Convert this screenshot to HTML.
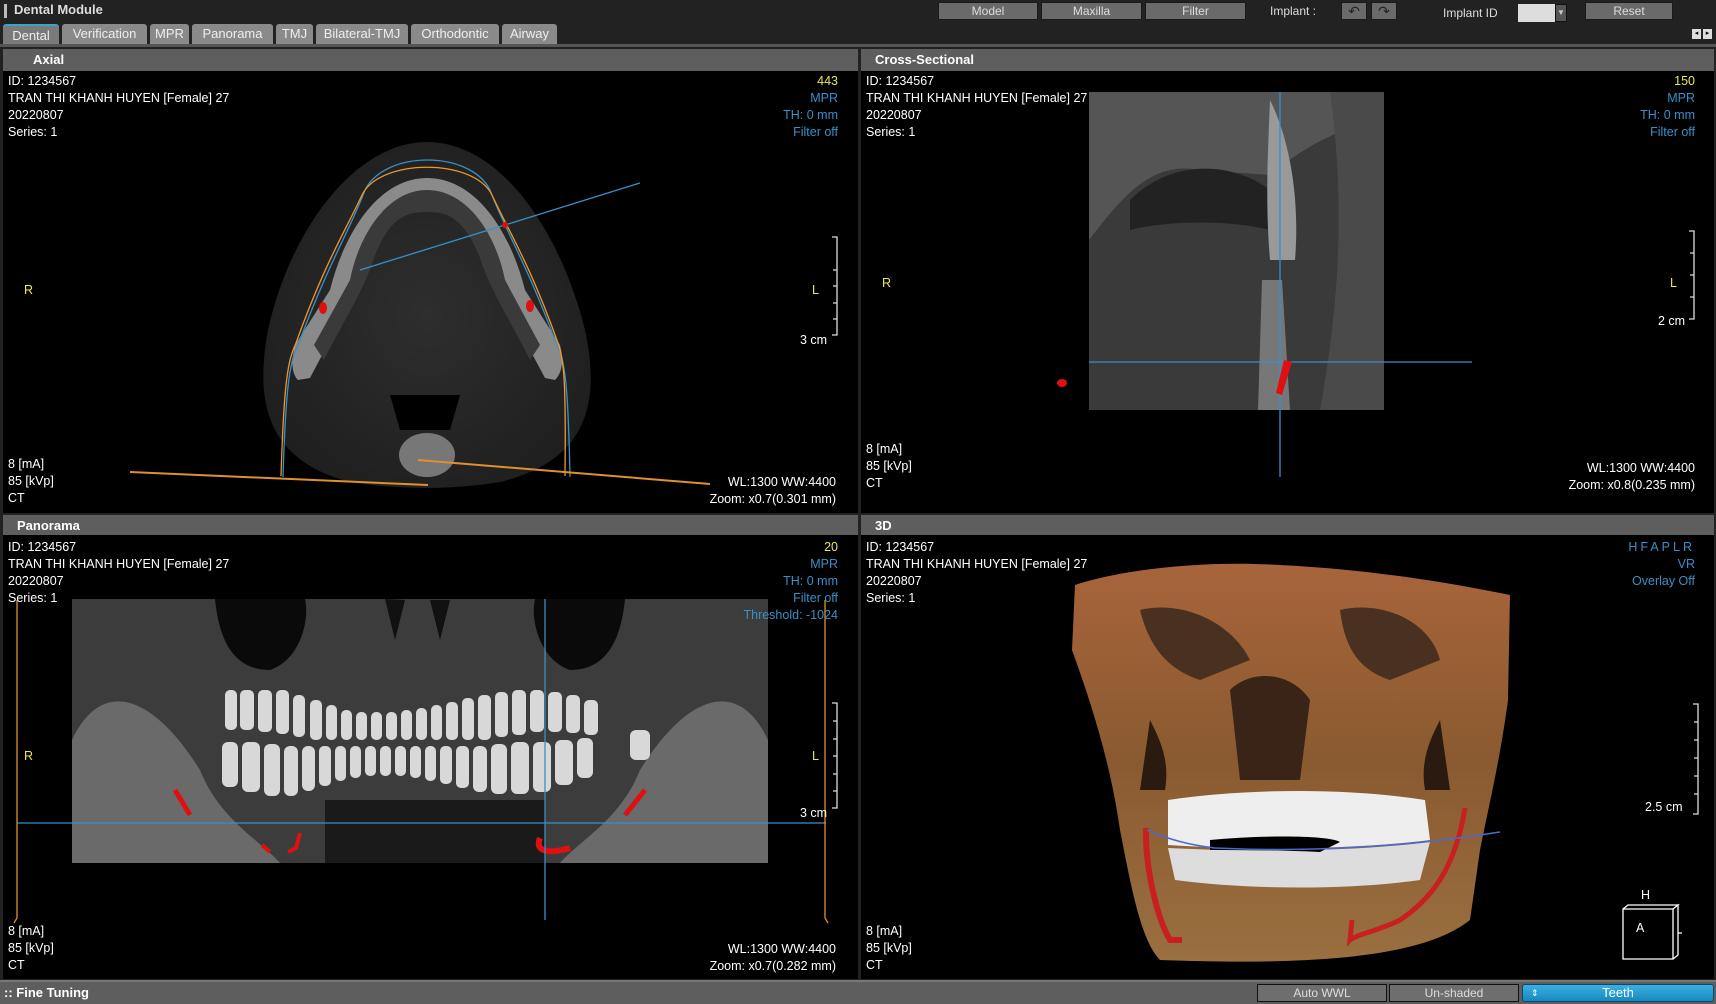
<!DOCTYPE html>
<html><head><meta charset="utf-8"><style>
*{margin:0;padding:0;box-sizing:border-box}
body{width:1716px;height:1004px;background:#222;overflow:hidden;position:relative;font-family:"Liberation Sans",sans-serif;color:#fff}
.a{position:absolute;white-space:nowrap}
.btn{position:absolute;top:2px;height:18px;background:#6a6a6a;border:1px solid #1a1a1a;color:#ddd;font-size:12px;text-align:center;line-height:16px}
.tab{position:absolute;top:24px;height:20px;background:#8a8a8a;color:#eee;font-size:13px;line-height:20px;text-align:center;border-radius:3px 3px 0 0}
.hdr{position:absolute;height:22px;background:#5e5e5e;color:#fff;font-weight:bold;font-size:13px;line-height:22px;padding-left:14px}
.view{position:absolute;background:#000}
.t{position:absolute;font-size:12.5px;line-height:17px;color:#fff;white-space:nowrap}
.r{text-align:right}
.y{color:#e8e85a}.b{color:#3a8fc8}
</style></head><body>
<div class="a" style="left:4px;top:4px;width:3px;height:14px;background:#bbb"></div>
<div class="a" style="left:14px;top:2px;font-size:13px;font-weight:bold;color:#ddd">Dental Module</div>
<div class="tab" style="left:3px;width:56px;background:#7a7a7a;border-top:2px solid #3aa3c8">Dental</div>
<div class="tab" style="left:62px;width:85px">Verification</div>
<div class="tab" style="left:150px;width:39px">MPR</div>
<div class="tab" style="left:192px;width:81px">Panorama</div>
<div class="tab" style="left:276px;width:37px">TMJ</div>
<div class="tab" style="left:316px;width:92px">Bilateral-TMJ</div>
<div class="tab" style="left:411px;width:88px">Orthodontic</div>
<div class="tab" style="left:502px;width:55px">Airway</div>
<div class="a" style="left:0;top:44px;width:1716px;height:3px;background:#555"></div>
<div class="btn" style="left:938px;width:100px">Model</div>
<div class="btn" style="left:1041px;width:101px">Maxilla</div>
<div class="btn" style="left:1145px;width:101px">Filter</div>
<div class="a" style="left:1270px;top:4px;font-size:12px;color:#ddd">Implant :</div>
<div class="btn" style="left:1341px;width:26px;font-size:14px;color:#222">↶</div>
<div class="btn" style="left:1371px;width:26px;font-size:14px;color:#222">↷</div>
<div class="a" style="left:1443px;top:6px;font-size:12px;color:#ddd">Implant ID</div>
<div class="a" style="left:1518px;top:4px;width:37px;height:18px;background:#ddd"></div>
<div class="a" style="left:1555px;top:4px;width:12px;height:18px;background:#555;border:1px solid #111;font-size:8px;color:#ccc;text-align:center;line-height:16px">▼</div>
<div class="btn" style="left:1585px;width:88px">Reset</div>
<div class="a" style="left:1692px;top:29px;width:9px;height:10px;background:#ddd;font-size:7px;color:#000;text-align:center">◂</div>
<div class="a" style="left:1703px;top:29px;width:9px;height:10px;background:#ddd;font-size:7px;color:#000;text-align:center">▸</div>

<div class="hdr" style="left:3px;top:49px;width:855px;padding-left:30px">Axial</div>
<div class="hdr" style="left:861px;top:49px;width:853px">Cross-Sectional</div>
<div class="hdr" style="left:3px;top:515px;width:855px">Panorama</div>
<div class="hdr" style="left:861px;top:515px;width:853px">3D</div>
<div class="view" style="left:3px;top:71px;width:855px;height:442px"></div>
<div class="view" style="left:861px;top:71px;width:853px;height:442px"></div>
<div class="view" style="left:3px;top:535px;width:855px;height:444px"></div>
<div class="view" style="left:861px;top:535px;width:853px;height:444px"></div>

<svg class="a" style="left:0;top:0" width="1716" height="1004">
<defs>
<radialGradient id="sk" cx="0.5" cy="0.5" r="0.6"><stop offset="0" stop-color="#2e2e2e"/><stop offset="1" stop-color="#1e1e1e"/></radialGradient>
<linearGradient id="or" x1="0" y1="0" x2="0" y2="1"><stop offset="0" stop-color="#a8643a"/><stop offset="0.5" stop-color="#8a5a30"/><stop offset="1" stop-color="#9a7040"/></linearGradient>
</defs>
<!-- Axial -->
<path d="M427 142 C500 142 560 230 585 330 C600 400 590 460 500 482 C450 490 400 490 350 482 C265 460 255 400 268 330 C290 230 355 142 427 142Z" fill="url(#sk)"/>
<path d="M427 178 C475 178 510 230 525 290 L560 345 C565 365 560 375 555 380 L545 378 C520 330 500 300 490 265 C470 210 445 205 427 205 C408 205 384 210 365 265 C355 300 335 330 310 378 L298 380 C293 375 290 365 295 345 L330 290 C345 230 380 178 427 178Z" fill="#8a8a8a"/>
<path d="M427 190 C465 190 495 230 505 280 L540 345 L530 360 C510 320 490 290 480 258 C463 215 445 212 427 212 C409 212 390 215 374 258 C364 290 344 320 324 360 L314 345 L350 280 C360 230 390 190 427 190Z" fill="#3a3a3a"/>
<ellipse cx="427" cy="455" rx="28" ry="22" fill="#777"/>
<path d="M390 395 L460 395 L450 430 L400 430Z" fill="#000"/>
<path d="M283 477 C286 380 290 360 300 340 C330 260 350 230 365 190 C385 150 470 150 490 190 C505 230 525 260 555 340 C565 360 568 380 570 477" fill="none" stroke="#3a8fc8" stroke-width="1.3"/>
<path d="M281 476 C284 380 288 360 296 343 C325 262 345 232 362 195 C380 158 474 158 492 195 C509 232 529 262 558 343 C564 360 566 380 565 476" fill="none" stroke="#f0962a" stroke-width="1.3"/>
<line x1="130" y1="472" x2="428" y2="485" stroke="#e0902e" stroke-width="2"/>
<line x1="418" y1="460" x2="710" y2="484" stroke="#e0902e" stroke-width="2"/>
<line x1="360" y1="270" x2="640" y2="183" stroke="#3a8fc8" stroke-width="1.3"/>
<ellipse cx="323" cy="308" rx="4" ry="6" fill="#e01010"/><ellipse cx="530" cy="306" rx="4" ry="6" fill="#e01010"/><circle cx="505" cy="225" r="3" fill="#e01010"/>
<path d="M832 237 h5 v98 h-5 M833 270h4 M833 303h4 M833 319h4 M833 286h4" fill="none" stroke="#ddd" stroke-width="1.3"/>
<!-- Cross-sectional -->
<rect x="1089" y="92" width="295" height="318" fill="#3a3a3a"/>
<path d="M1089 92 h295 v30 C1340 125 1300 150 1270 175 L1200 170 C1150 160 1120 200 1089 240Z" fill="#555"/>
<path d="M1130 200 C1170 160 1230 160 1270 190 L1270 230 C1230 220 1170 220 1130 230Z" fill="#222"/>
<path d="M1270 100 C1290 140 1300 200 1295 260 L1270 260 C1265 200 1268 150 1270 100Z" fill="#999"/>
<path d="M1262 280 L1282 280 L1290 410 L1258 410Z" fill="#777"/>
<path d="M1330 92 L1384 92 L1384 410 L1320 410 C1340 300 1345 200 1330 92Z" fill="#4a4a4a"/>
<line x1="1280" y1="92" x2="1280" y2="477" stroke="#3a8fc8" stroke-width="1.3"/>
<line x1="1089" y1="362" x2="1472" y2="362" stroke="#3a8fc8" stroke-width="1.3"/>
<path d="M1284 360 L1292 362 L1282 395 L1276 393Z" fill="#e01010"/>
<ellipse cx="1062" cy="383" rx="5" ry="4" fill="#e01010"/>
<path d="M1689 231 h5 v88 h-5 M1690 253h4 M1690 275h4 M1690 297h4" fill="none" stroke="#ddd" stroke-width="1.3"/>
<!-- Panorama -->
<rect x="72" y="599" width="696" height="264" fill="#3c3c3c"/>
<path d="M215 599 C220 650 240 670 270 670 C300 660 310 620 305 599Z M625 599 C620 650 600 670 570 670 C540 660 530 620 535 599Z" fill="#0a0a0a"/>
<path d="M385 599 L395 640 L405 600Z M430 600 L440 640 L450 600Z" fill="#111"/>
<path d="M72 740 C100 680 150 690 200 770 C220 820 260 840 280 863 L72 863Z M768 740 C740 680 690 690 640 770 C620 820 580 840 560 863 L768 863Z" fill="#6a6a6a"/>
<path d="M325 800 L545 800 L545 863 L325 863Z" fill="#1a1a1a"/>
<g fill="#d8d8d8">
<rect x="225" y="690" width="12" height="40" rx="5"/><rect x="240" y="690" width="14" height="40" rx="5"/><rect x="258" y="690" width="14" height="42" rx="5"/><rect x="276" y="690" width="13" height="44" rx="5"/><rect x="293" y="695" width="12" height="42" rx="5"/><rect x="310" y="700" width="12" height="40" rx="5"/><rect x="326" y="705" width="11" height="35" rx="5"/><rect x="341" y="710" width="11" height="30" rx="5"/><rect x="356" y="712" width="11" height="28" rx="5"/><rect x="371" y="712" width="11" height="28" rx="5"/><rect x="386" y="712" width="11" height="28" rx="5"/><rect x="401" y="710" width="11" height="30" rx="5"/><rect x="416" y="708" width="11" height="32" rx="5"/><rect x="431" y="705" width="11" height="35" rx="5"/><rect x="446" y="702" width="12" height="38" rx="5"/><rect x="462" y="698" width="12" height="42" rx="5"/><rect x="478" y="695" width="13" height="45" rx="5"/><rect x="495" y="692" width="13" height="45" rx="5"/><rect x="512" y="690" width="14" height="45" rx="5"/><rect x="530" y="690" width="14" height="42" rx="5"/><rect x="548" y="692" width="14" height="40" rx="5"/><rect x="566" y="695" width="14" height="38" rx="5"/><rect x="584" y="700" width="14" height="35" rx="5"/>
<rect x="222" y="742" width="16" height="45" rx="6"/><rect x="242" y="742" width="18" height="50" rx="6"/><rect x="264" y="744" width="16" height="52" rx="6"/><rect x="284" y="746" width="14" height="50" rx="6"/><rect x="302" y="746" width="13" height="45" rx="6"/><rect x="319" y="746" width="12" height="40" rx="5"/><rect x="335" y="746" width="11" height="35" rx="5"/><rect x="350" y="746" width="11" height="32" rx="5"/><rect x="365" y="746" width="11" height="30" rx="5"/><rect x="380" y="746" width="11" height="30" rx="5"/><rect x="395" y="746" width="11" height="30" rx="5"/><rect x="410" y="746" width="11" height="32" rx="5"/><rect x="425" y="746" width="11" height="35" rx="5"/><rect x="440" y="746" width="12" height="38" rx="5"/><rect x="456" y="746" width="13" height="42" rx="5"/><rect x="473" y="746" width="14" height="46" rx="6"/><rect x="491" y="744" width="16" height="50" rx="6"/><rect x="511" y="742" width="18" height="52" rx="6"/><rect x="533" y="742" width="18" height="50" rx="6"/><rect x="555" y="740" width="18" height="45" rx="6"/><rect x="577" y="738" width="16" height="40" rx="6"/><rect x="630" y="730" width="20" height="30" rx="6"/>
</g>
<path d="M175 790 L190 815" stroke="#e01010" stroke-width="5"/><path d="M645 790 L625 815" stroke="#e01010" stroke-width="5"/>
<path d="M262 845 L270 852 M300 833 L296 848 L288 852" stroke="#e01010" stroke-width="4" fill="none"/>
<path d="M540 838 C535 850 545 855 570 848" stroke="#e01010" stroke-width="6" fill="none"/>
<line x1="545" y1="599" x2="545" y2="920" stroke="#3a8fc8" stroke-width="1.3"/>
<line x1="17" y1="823" x2="826" y2="823" stroke="#3a8fc8" stroke-width="1.3"/>
<path d="M17 600 V918 l-3 5 M825 600 V918 l3 5" stroke="#e0902e" stroke-width="1.3" fill="none"/>
<path d="M832 703 h5 v105 h-5 M833 721h4 M833 739h4 M833 756h4 M833 774h4 M833 791h4" fill="none" stroke="#ddd" stroke-width="1.3"/>
<!-- 3D -->
<path d="M1075 585 C1120 570 1200 560 1280 565 C1380 570 1460 585 1510 595 L1508 700 C1500 760 1490 800 1480 850 L1470 920 C1420 960 1300 965 1160 960 C1140 940 1130 880 1120 830 C1110 760 1090 700 1072 650Z" fill="url(#or)"/>
<path d="M1140 610 C1180 600 1230 620 1250 660 L1200 680 C1170 670 1150 650 1140 610Z M1340 610 C1380 600 1430 620 1440 660 L1390 680 C1360 670 1345 650 1340 610Z" fill="#4a3020"/>
<path d="M1230 690 C1250 670 1290 670 1310 700 L1300 780 L1240 780Z" fill="#3a2418"/>
<path d="M1150 720 C1160 740 1170 760 1165 790 L1140 790Z M1440 720 C1430 740 1420 760 1425 790 L1450 790Z" fill="#2a1a10"/>
<path d="M1168 800 C1250 788 1350 788 1425 800 L1430 840 C1350 850 1250 850 1168 845Z" fill="#eee"/>
<path d="M1168 848 C1250 852 1350 852 1430 842 L1420 880 C1350 890 1250 890 1175 880Z" fill="#ddd"/>
<path d="M1210 840 C1260 835 1330 835 1340 842 L1320 852 C1280 850 1240 850 1210 850Z" fill="#000"/>
<path d="M1146 828 C1145 870 1158 920 1170 940 L1182 940" stroke="#c82020" stroke-width="6" fill="none"/>
<path d="M1465 808 C1455 870 1430 900 1400 920 C1380 930 1355 935 1350 940 L1352 920" stroke="#c82020" stroke-width="5" fill="none"/>
<path d="M1147 830 C1170 840 1190 845 1215 848 C1300 852 1400 848 1500 832" stroke="#4a6ad0" stroke-width="1.5" fill="none"/>
<path d="M1693 704 h5 v110 h-5 M1694 722h4 M1694 740h4 M1694 758h4 M1694 776h4 M1694 794h4" fill="none" stroke="#ddd" stroke-width="1.3"/>
<path d="M1623 909 h50 v50 h-50Z M1623 909 l5 -4 h50 l-5 4 M1673 909 l5 -4 v50 l-5 4 M1678 933 h4" fill="none" stroke="#fff" stroke-width="1.3"/>
</svg>

<!-- Axial text -->
<div class="t" style="left:8px;top:73px">ID: 1234567<br>TRAN THI KHANH HUYEN [Female] 27<br>20220807<br>Series: 1</div>
<div class="t r" style="right:878px;top:73px"><span class="y">443</span><br><span class="b">MPR</span><br><span class="b">TH: 0 mm</span><br><span class="b">Filter off</span></div>
<div class="t y" style="left:24px;top:282px">R</div><div class="t y" style="left:812px;top:282px">L</div>
<div class="t" style="left:800px;top:332px">3 cm</div>
<div class="t" style="left:8px;top:456px">8 [mA]<br>85 [kVp]<br>CT</div>
<div class="t r" style="right:880px;top:474px">WL:1300 WW:4400<br>Zoom: x0.7(0.301 mm)</div>
<!-- Cross -->
<div class="t" style="left:866px;top:73px">ID: 1234567<br>TRAN THI KHANH HUYEN [Female] 27<br>20220807<br>Series: 1</div>
<div class="t r" style="right:21px;top:73px"><span class="y">150</span><br><span class="b">MPR</span><br><span class="b">TH: 0 mm</span><br><span class="b">Filter off</span></div>
<div class="t y" style="left:882px;top:275px">R</div><div class="t y" style="left:1670px;top:275px">L</div>
<div class="t" style="left:1658px;top:313px">2 cm</div>
<div class="t" style="left:866px;top:441px">8 [mA]<br>85 [kVp]<br>CT</div>
<div class="t r" style="right:21px;top:460px">WL:1300 WW:4400<br>Zoom: x0.8(0.235 mm)</div>
<!-- Panorama -->
<div class="t" style="left:8px;top:539px">ID: 1234567<br>TRAN THI KHANH HUYEN [Female] 27<br>20220807<br>Series: 1</div>
<div class="t r" style="right:878px;top:539px"><span class="y">20</span><br><span class="b">MPR</span><br><span class="b">TH: 0 mm</span><br><span class="b">Filter off</span><br><span class="b">Threshold: -1024</span></div>
<div class="t y" style="left:24px;top:748px">R</div><div class="t y" style="left:812px;top:748px">L</div>
<div class="t" style="left:800px;top:805px">3 cm</div>
<div class="t" style="left:8px;top:923px">8 [mA]<br>85 [kVp]<br>CT</div>
<div class="t r" style="right:880px;top:941px">WL:1300 WW:4400<br>Zoom: x0.7(0.282 mm)</div>
<!-- 3D -->
<div class="t" style="left:866px;top:539px">ID: 1234567<br>TRAN THI KHANH HUYEN [Female] 27<br>20220807<br>Series: 1</div>
<div class="t r" style="right:21px;top:539px"><span class="b" style="letter-spacing:3px">HFAPLR</span><br><span class="b">VR</span><br><span class="b">Overlay Off</span></div>
<div class="t" style="left:1645px;top:799px">2.5 cm</div>
<div class="t" style="left:1641px;top:887px">H</div>
<div class="t" style="left:1636px;top:920px">A</div>
<div class="t" style="left:866px;top:923px">8 [mA]<br>85 [kVp]<br>CT</div>

<!-- bottom bar -->
<div class="a" style="left:0;top:980px;width:1716px;height:24px;background:#5e5e5e;border-top:2px solid #777"></div>
<div class="a" style="left:4px;top:985px;font-size:13px;font-weight:bold;color:#fff">:: Fine Tuning</div>
<div class="a" style="left:1257px;top:984px;width:130px;height:18px;background:#6e6e6e;border:1px solid #111;color:#ddd;font-size:12px;text-align:center;line-height:16px">Auto WWL</div>
<div class="a" style="left:1389px;top:984px;width:130px;height:18px;background:#6e6e6e;border:1px solid #111;color:#ddd;font-size:12px;text-align:center;line-height:16px">Un-shaded</div>
<div class="a" style="left:1522px;top:984px;width:192px;height:18px;background:linear-gradient(#3ab0e0,#1888c0);border:1px solid #0a4a70;border-radius:3px;color:#fff;font-size:13px;text-align:center;line-height:16px"><span style="position:absolute;left:8px;font-size:9px">⇕</span>Teeth</div>
</body></html>
